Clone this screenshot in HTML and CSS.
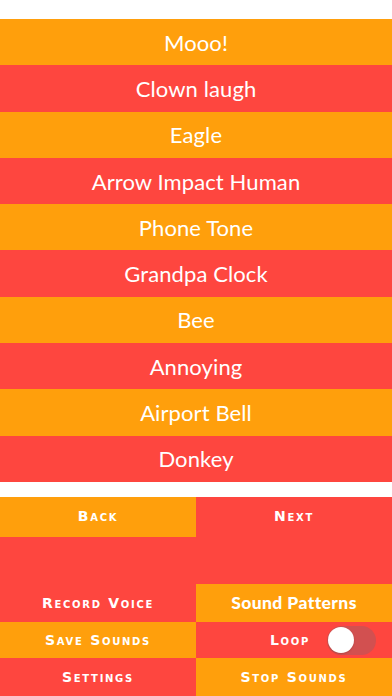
FILE: index.html
```html
<!DOCTYPE html>
<html>
<head>
<meta charset="utf-8">
<link rel="stylesheet" href="styles.css">
</head>
<body>
<div class="app">
  <div class="topbar"></div>
  <div class="list">
    <div class="item orange">Mooo!</div>
    <div class="item red">Clown laugh</div>
    <div class="item orange">Eagle</div>
    <div class="item red">Arrow Impact Human</div>
    <div class="item orange">Phone Tone</div>
    <div class="item red">Grandpa Clock</div>
    <div class="item orange">Bee</div>
    <div class="item red">Annoying</div>
    <div class="item orange">Airport Bell</div>
    <div class="item red">Donkey</div>
  </div>
  <div class="gap"></div>
  <div class="nav">
    <div class="btn orange">Back</div>
    <div class="btn red">Next</div>
  </div>
  <div class="spacer red"></div>
  <div class="controls">
    <div class="ctl red">Record Voice</div>
    <div class="ctl orange patterns">Sound Patterns</div>
    <div class="ctl orange">Save Sounds</div>
    <div class="ctl red loop"><span>Loop</span><div class="switch"><div class="knob"></div></div></div>
    <div class="ctl red">Settings</div>
    <div class="ctl orange">Stop Sounds</div>
  </div>
</div>
</body>
</html>
```
FILE: styles.css
```css
html, body {
  margin: 0;
  padding: 0;
  background: #fff;
}
.app {
  width: 392px;
  height: 696px;
  display: flex;
  flex-direction: column;
  overflow: hidden;
}
.orange { background: #ff9f0c; }
.red { background: #fe463f; }
.topbar { height: 19px; background: #fff; }
.list { display: flex; flex-direction: column; }
.item {
  height: 46.3px;
  display: flex;
  align-items: center;
  justify-content: center;
  color: #fff;
  font-family: Lato, "Open Sans", sans-serif;
  font-size: 22px;
  letter-spacing: 0.1px;
}
.gap { height: 15px; background: #fff; }
.nav {
  display: grid;
  grid-template-columns: 196px 196px;
  height: 40px;
}
.btn, .ctl {
  display: flex;
  align-items: center;
  justify-content: center;
  color: #fff;
  font-family: "DejaVu Sans", sans-serif;
  font-weight: bold;
  font-variant: small-caps;
  font-size: 14px;
  letter-spacing: 1.7px;
}
.btn { padding-bottom: 1px; }
.spacer { height: 47px; }
.controls {
  display: grid;
  grid-template-columns: 196px 196px;
  grid-template-rows: 38px 36px 38px;
}
.ctl.patterns {
  font-family: Lato, sans-serif;
  font-variant: normal;
  font-size: 17.5px;
  letter-spacing: 0.4px;
  font-weight: 900;
}
.loop { position: relative; }
.loop span { margin-right: 8px; }
.switch {
  position: absolute;
  left: 131px;
  top: 4px;
  width: 49px;
  height: 29px;
  border-radius: 15px;
  background: #d25050;
}
.knob {
  position: absolute;
  left: 1px;
  top: 1.5px;
  width: 26px;
  height: 26px;
  border-radius: 50%;
  background: #fff;
  box-shadow: 0 1px 2px rgba(0,0,0,0.15);
}
```
